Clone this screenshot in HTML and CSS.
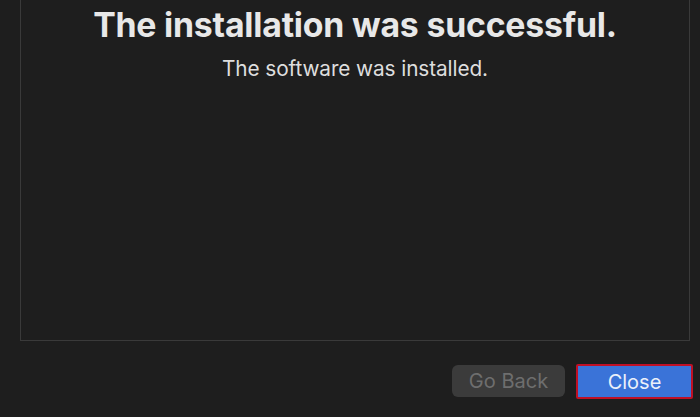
FILE: index.html
```html
<!DOCTYPE html>
<html lang="en">
<head>
<meta charset="utf-8">
<title>Installer</title>
<link rel="stylesheet" href="styles.css">
</head>
<body>
<div class="window">
  <section class="panel">
    <h1 class="title">The installation was successful.</h1>
    <p class="subtitle">The software was installed.</p>
  </section>
  <footer class="actions">
    <button class="btn btn-secondary" disabled>Go Back</button>
    <button class="btn btn-primary">Close</button>
  </footer>
</div>
</body>
</html>
```
FILE: styles.css
```css
html, body {
  margin: 0;
  padding: 0;
  background: #1e1e1e;
}
body {
  width: 700px;
  height: 417px;
  overflow: hidden;
  font-family: Inter, "Liberation Sans", sans-serif;
}
.window {
  display: flex;
  flex-direction: column;
  padding: 0 10px 0 20px;
}
.panel {
  box-sizing: border-box;
  width: 670px;
  height: 341px;
  border: 1px solid #3a3a3a;
  border-top: none;
  display: flex;
  flex-direction: column;
  align-items: center;
  padding-top: 4px;
}
.title {
  margin: 0;
  font-size: 33.8px;
  font-weight: 700;
  color: #e8e8e8;
  letter-spacing: -0.2px;
  line-height: 42px;
}
.subtitle {
  margin: 11px 0 0;
  font-size: 20.8px;
  color: #dedede;
  line-height: 24px;
  letter-spacing: -0.1px;
}
.actions {
  display: flex;
  justify-content: flex-end;
  gap: 11px;
  margin-top: 23px;
  margin-right: -3px;
}
.btn {
  font-family: Inter, "Liberation Sans", sans-serif;
  font-size: 20px;
  height: 33px;
  border-radius: 6px;
  border: none;
  padding: 0;
}
.btn-secondary {
  width: 113px;
  margin-top: 1px;
  height: 32px;
  background: #3b3b3b;
  color: #6e6e6e;
}
.btn-primary {
  width: 117px;
  height: 35px;
  background: #3a73d8;
  color: #eaf0fa;
  border: 2px solid #c01025;
  border-radius: 2px;
}
```
